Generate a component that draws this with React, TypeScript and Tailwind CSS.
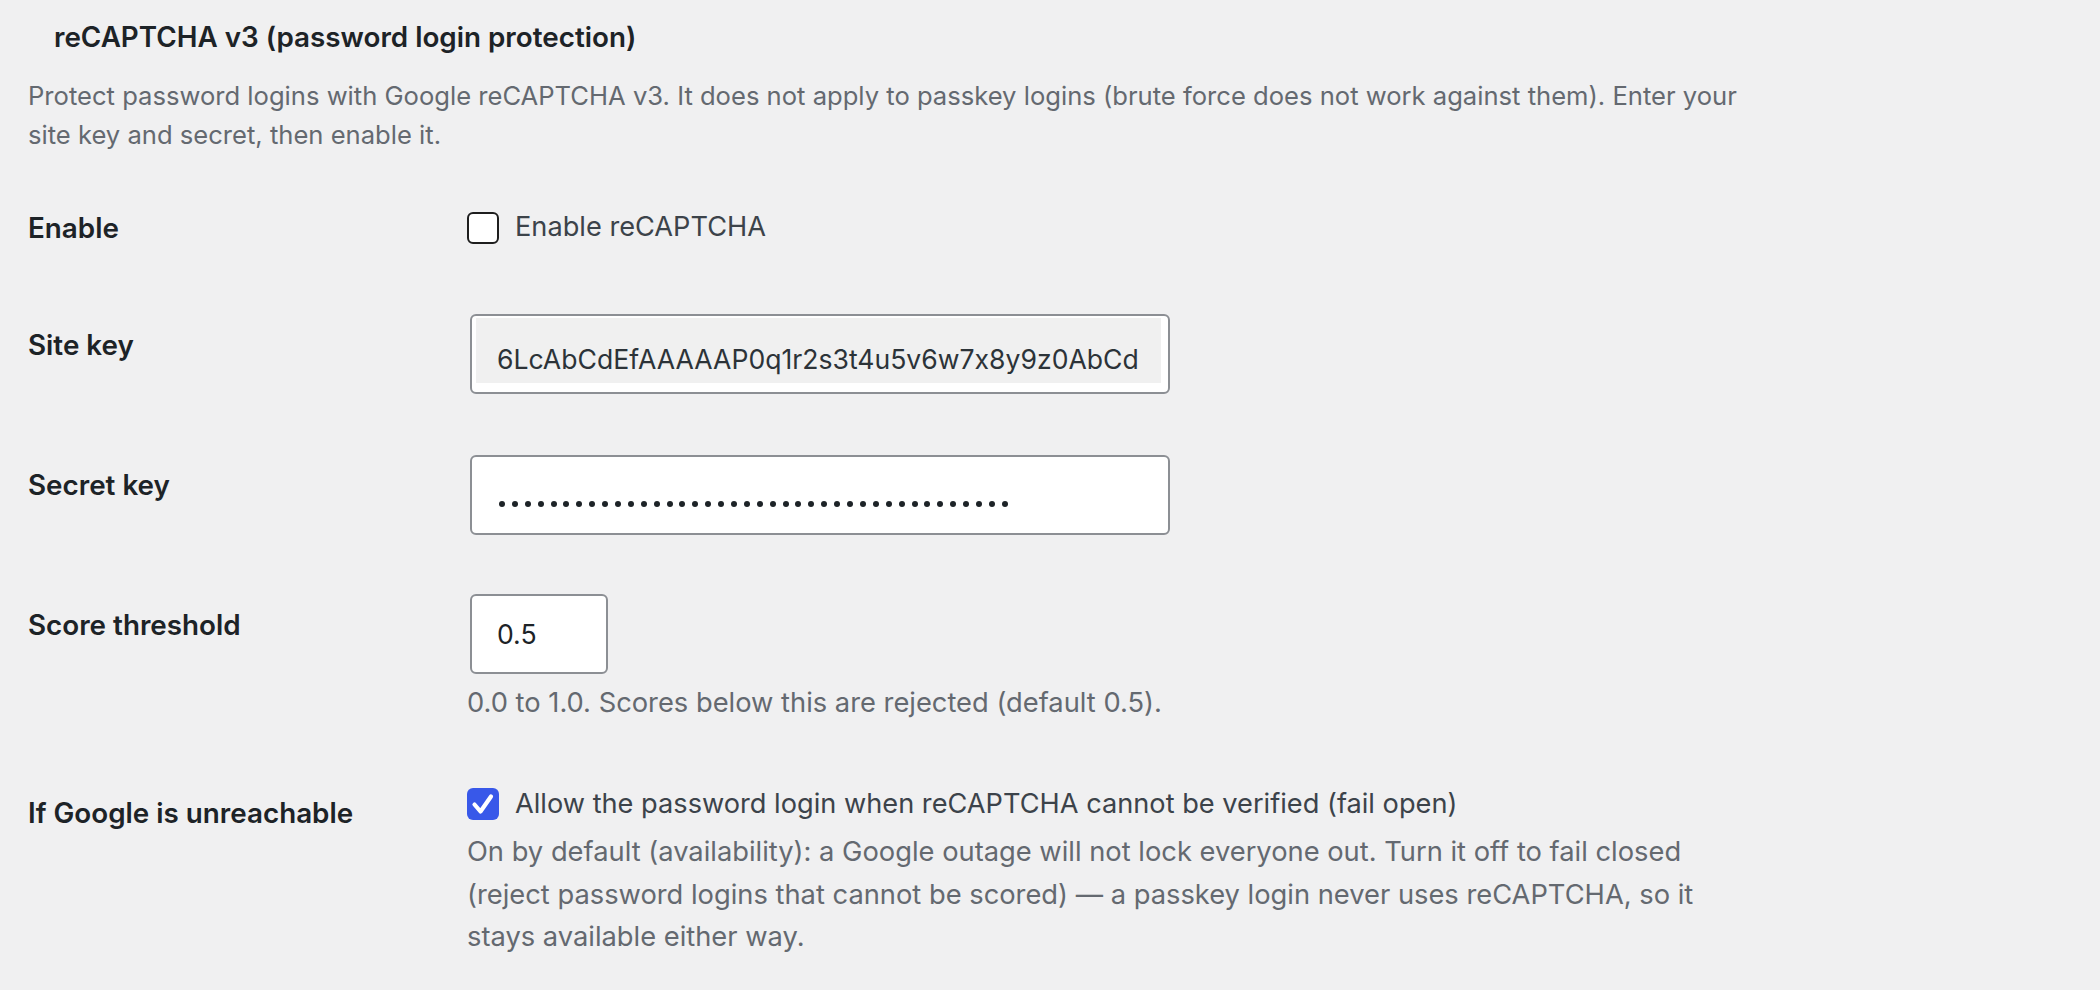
import React from "react";

const font = { fontFamily: "Inter, 'Noto Sans', sans-serif" };

const Checkbox = ({ checked }: { checked?: boolean }) =>
  checked ? (
    <span className="flex h-[32px] w-[32px] shrink-0 items-center justify-center rounded-[6px] bg-[#3858e9]">
      <svg width="32" height="32" viewBox="0 0 32 32" fill="none">
        <polyline
          points="7.5,16.5 13.5,23.5 24,8.5"
          stroke="#ffffff"
          strokeWidth="4.2"
          strokeLinecap="round"
          strokeLinejoin="round"
        />
      </svg>
    </span>
  ) : (
    <span className="h-[32px] w-[32px] shrink-0 rounded-[6px] border-2 border-[#1e1e1e] bg-white" />
  );

const Label = ({ children, pt }: { children: React.ReactNode; pt: string }) => (
  <div className={`w-[439px] shrink-0 ${pt}`}>
    <div className="text-[27.8px] font-semibold leading-[36px] text-[#1d2327]">{children}</div>
  </div>
);

const dots = Array.from({ length: 40 });

export default function App() {
  return (
    <div
      className="min-h-screen w-full bg-[#f0f0f1] pl-[28px] text-[#1d2327] [font-feature-settings:'calt'_0]"
      style={font}
    >
      {/* section heading */}
      <h2 className="pl-[26px] pt-[17px] text-[27.8px] font-semibold leading-[40px] text-[#1d2327]">
        reCAPTCHA v3 (password login protection)
      </h2>
      <p className="mt-[19px] whitespace-nowrap text-[25.6px] leading-[39px] text-[#646970]">
        Protect password logins with Google reCAPTCHA v3. It does not apply to passkey logins (brute force does not work against them). Enter your
        <br />
        site key and secret, then enable it.
      </p>

      <div className="mt-[13px] flex flex-col">
        {/* Enable */}
        <div className="flex h-[117px]">
          <Label pt="pt-[42.5px]">Enable</Label>
          <div className="pt-[37.5px]">
            <label className="flex h-[46px] items-center gap-[16px] text-[27.2px] text-[#3c434a]">
              <Checkbox />
              Enable reCAPTCHA
            </label>
          </div>
        </div>

        {/* Site key */}
        <div className="flex h-[139px]">
          <Label pt="pt-[43px]">Site key</Label>
          <div className="pl-[3px] pt-[30px]">
            <div className="flex h-[80px] w-[700px] rounded-[6px] border-2 border-[#8c8f94] bg-white">
              <div className="mb-[9px] ml-[4px] mr-[7px] mt-[2px] flex flex-1 items-center bg-[#f0f0f0] pl-[21px] pt-[17px]">
                <span className="text-[26.6px] leading-[36px] text-[#2c3338]">
                  6LcAbCdEfAAAAAP0q1r2s3t4u5v6w7x8y9z0AbCd
                </span>
              </div>
            </div>
          </div>
        </div>

        {/* Secret key */}
        <div className="flex h-[140px]">
          <Label pt="pt-[44px]">Secret key</Label>
          <div className="pl-[3px] pt-[32px]">
            <div className="flex h-[80px] w-[700px] items-center rounded-[6px] border-2 border-[#8c8f94] bg-white pl-[27px] pt-[17px]">
              <div className="flex gap-[6.9px]">
                {dots.map((_, i) => (
                  <span key={i} className="h-[6px] w-[6px] rounded-full bg-[#1d2327]" />
                ))}
              </div>
            </div>
          </div>
        </div>

        {/* Score threshold */}
        <div className="flex h-[189px]">
          <Label pt="pt-[44px]">Score threshold</Label>
          <div className="pt-[31px]">
            <div className="ml-[3px] flex h-[80px] w-[138px] items-center rounded-[6px] border-2 border-[#8c8f94] bg-white pl-[25px]">
              <span className="text-[26.6px] leading-[36px] text-[#1d2327]">0.5</span>
            </div>
            <p className="mt-[9px] text-[27.3px] leading-[39px] text-[#646970]">
              0.0 to 1.0. Scores below this are rejected (default 0.5).
            </p>
          </div>
        </div>

        {/* Fail open */}
        <div className="flex">
          <Label pt="pt-[43px]">If Google is unreachable</Label>
          <div className="pt-[29px]">
            <label className="flex h-[46px] items-center gap-[16px] text-[27.2px] text-[#3c434a]">
              <Checkbox checked />
              Allow the password login when reCAPTCHA cannot be verified (fail open)
            </label>
            <p className="mt-[4px] whitespace-nowrap text-[27.3px] leading-[42.5px] text-[#646970]">
              On by default (availability): a Google outage will not lock everyone out. Turn it off to fail closed
              <br />
              (reject password logins that cannot be scored) — a passkey login never uses reCAPTCHA, so it
              <br />
              stays available either way.
            </p>
          </div>
        </div>
      </div>
    </div>
  );
}
